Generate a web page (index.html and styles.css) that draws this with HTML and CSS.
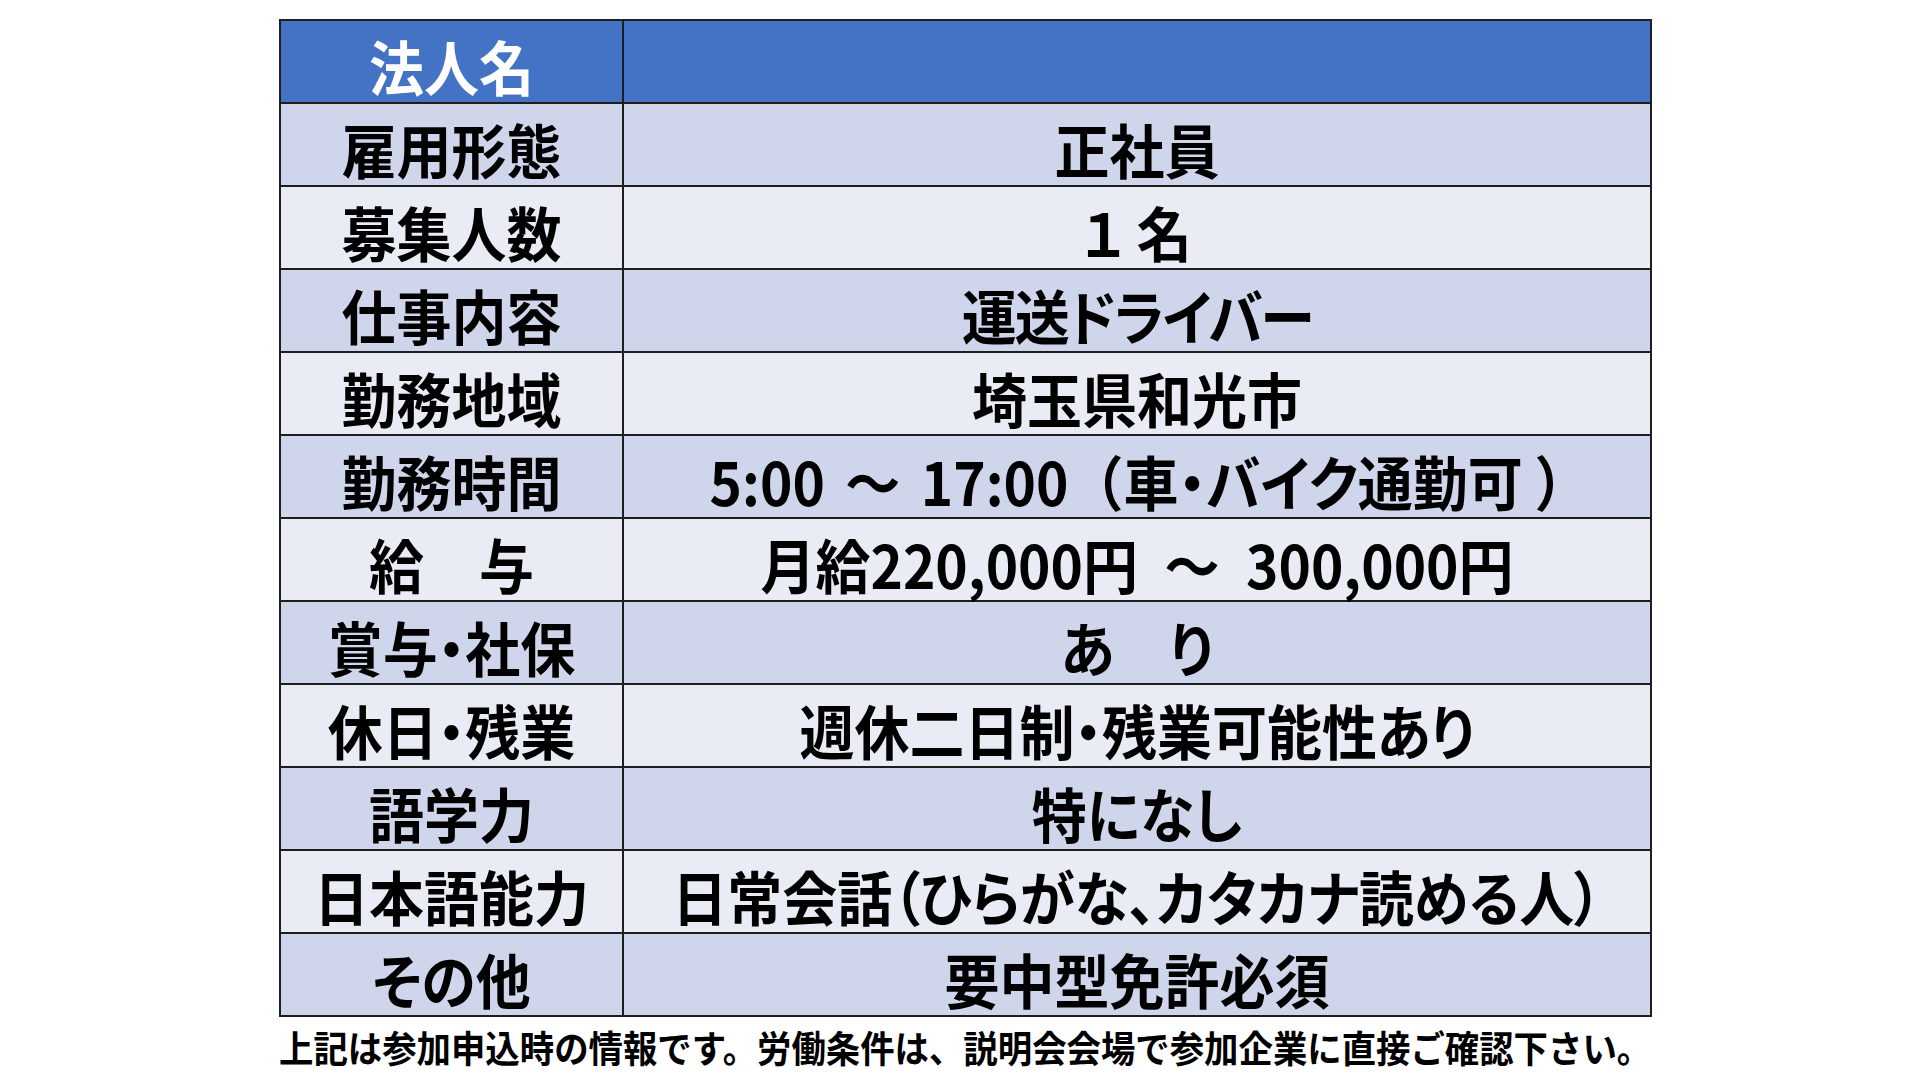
FILE: index.html
```html
<!DOCTYPE html>
<html lang="ja">
<head>
<meta charset="utf-8">
<link rel="stylesheet" href="styles.css">
</head>
<body>
<div class="page">
  <table class="jobs">
    <tr class="head"><th><span>法人名</span></th><td></td></tr>
    <tr class="odd"><th><span>雇用形態</span></th><td><span>正社員</span></td></tr>
    <tr class="even"><th><span>募集人数</span></th><td><span>１ 名</span></td></tr>
    <tr class="odd"><th><span>仕事内容</span></th><td class="kana"><span>運送ドライバー</span></td></tr>
    <tr class="even"><th><span>勤務地域</span></th><td><span>埼玉県和光市</span></td></tr>
    <tr class="odd"><th><span>勤務時間</span></th><td class="time"><span>5:00 ～ 17:00<i class="fw">（</i>車・バイク通勤可<i class="close">）</i></span></td></tr>
    <tr class="even"><th><span>給　与</span></th><td class="pay"><span>月給220,000円 ～ 300,000円</span></td></tr>
    <tr class="odd"><th><span>賞与・社保</span></th><td><span>あ　り</span></td></tr>
    <tr class="even"><th><span>休日・残業</span></th><td><span>週休二日制・残業可能性あり</span></td></tr>
    <tr class="odd"><th><span>語学力</span></th><td><span>特になし</span></td></tr>
    <tr class="even"><th><span>日本語能力</span></th><td><span>日常会話（ひらがな、カタカナ読める人）</span></td></tr>
    <tr class="odd"><th><span>その他</span></th><td><span>要中型免許必須</span></td></tr>
  </table>
  <p class="note">上記は参加申込時の情報です。労働条件は、説明会会場で参加企業に直接ご確認下さい。</p>
</div>
</body>
</html>
```

FILE: styles.css
```css
html, body {
  margin: 0;
  padding: 0;
  background: #ffffff;
}
body {
  font-family: "Noto Sans CJK JP", "Noto Sans", sans-serif;
  color: #000000;
}
.page {
  padding: 19px 0 0 279px;
}
.jobs {
  border-collapse: collapse;
  width: 1373px;
  table-layout: fixed;
}
.jobs th,
.jobs td {
  height: 83px;
  padding: 8px 0 0 0;
  box-sizing: border-box;
  border: 2px solid #1e1e1e;
  text-align: center;
  vertical-align: middle;
  font-size: 55px;
  font-weight: 700;
  line-height: 1;
  white-space: nowrap;
  font-feature-settings: "palt";
}
.jobs th > span,
.jobs td > span {
  display: inline-block;
  transform: scaleY(1.08);
}
.jobs th {
  width: 343px;
}
.jobs td.kana {
  letter-spacing: -2px;
}
.jobs td.time {
  word-spacing: 8px;
}
.jobs td.time .fw {
  font-style: normal;
  font-feature-settings: normal;
}
.jobs td.time .close {
  font-style: normal;
  margin-left: 14px;
}
.jobs td.pay {
  word-spacing: 14px;
}
.head th,
.head td {
  background: #4472c4;
  color: #ffffff;
}
.odd th,
.odd td {
  background: #cfd5ea;
}
.even th,
.even td {
  background: #e9ebf5;
}
.note {
  margin: 12px 0 0 0;
  font-size: 34.4px;
  font-weight: 700;
  line-height: 1.1;
  white-space: nowrap;
  transform: scaleY(1.08);
  transform-origin: left center;
}
```
